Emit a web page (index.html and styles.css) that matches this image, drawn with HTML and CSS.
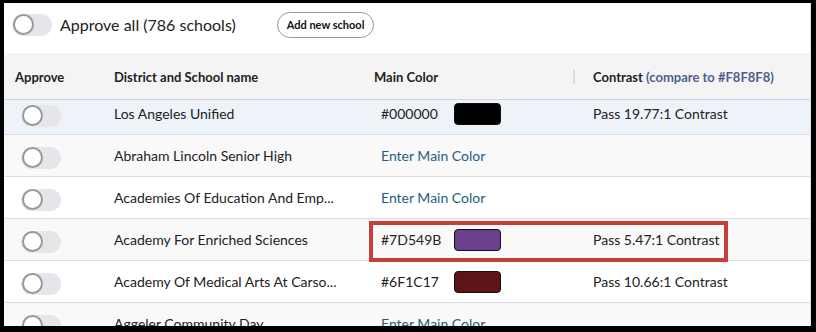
FILE: index.html
```html
<!DOCTYPE html>
<html lang="en">
<head>
    <meta charset="UTF-8">
    <meta name="viewport" content="width=device-width, initial-scale=1.0">
    <title>School colors</title>
    <link rel="stylesheet" href="styles.css">
</head>
<body>
    <div class="frame">
        <div class="toolbar">
            <span class="toggle"><span class="knob"></span></span>
            <span class="approve-all">Approve all (786 schools)</span>
            <button class="add-btn" type="button">Add new school</button>
        </div>
        <div class="thead">
            <div class="th">Approve</div>
            <div class="th">District and School name</div>
            <div class="th th-color">Main Color <span class="sep"></span></div>
            <div class="th">Contrast <span class="compare">(compare to #F8F8F8)</span></div>
        </div>
        <div class="tbody">
            <div class="rows">
                <div class="row row-active">
                    <div class="cell"><span class="toggle"><span class="knob"></span></span></div>
                    <div class="cell">Los Angeles Unified</div>
                    <div class="cell cell-color"><span class="hex">#000000</span><span class="swatch" style="background:#000000"></span></div>
                    <div class="cell">Pass 19.77:1 Contrast</div>
                </div>
                <div class="row row-alt">
                    <div class="cell"><span class="toggle"><span class="knob"></span></span></div>
                    <div class="cell">Abraham Lincoln Senior High</div>
                    <div class="cell cell-color"><a class="enter-link" href="#">Enter Main Color</a></div>
                    <div class="cell"></div>
                </div>
                <div class="row">
                    <div class="cell"><span class="toggle"><span class="knob"></span></span></div>
                    <div class="cell">Academies Of Education And Emp...</div>
                    <div class="cell cell-color"><a class="enter-link" href="#">Enter Main Color</a></div>
                    <div class="cell"></div>
                </div>
                <div class="row row-alt">
                    <div class="cell"><span class="toggle"><span class="knob"></span></span></div>
                    <div class="cell">Academy For Enriched Sciences</div>
                    <div class="cell cell-color"><span class="hex">#7D549B</span><span class="swatch" style="background:#6b3f8c"></span></div>
                    <div class="cell">Pass 5.47:1 Contrast</div>
                </div>
                <div class="row">
                    <div class="cell"><span class="toggle"><span class="knob"></span></span></div>
                    <div class="cell">Academy Of Medical Arts At Carso...</div>
                    <div class="cell cell-color"><span class="hex">#6F1C17</span><span class="swatch" style="background:#5c1515"></span></div>
                    <div class="cell">Pass 10.66:1 Contrast</div>
                </div>
                <div class="row row-alt">
                    <div class="cell"><span class="toggle"><span class="knob"></span></span></div>
                    <div class="cell">Aggeler Community Day</div>
                    <div class="cell cell-color"><a class="enter-link" href="#">Enter Main Color</a></div>
                    <div class="cell"></div>
                </div>
            </div>
        </div>
        <div class="highlight"></div>
    </div>
</body>
</html>
```

FILE: styles.css
```css
*, *:before, *:after {
    margin: 0;
    padding: 0;
    box-sizing: border-box;
}
html, body {
    background: #000;
    overflow: hidden;
}
body {
    padding: 3px 5px 6px 4px;
    font-family: Lato, "Liberation Sans", sans-serif;
    color: #222;
}
.frame {
    position: relative;
    height: 323px;
    background: #fff;
    overflow: hidden;
    border-right: 1px solid #e2e2e6;
}
.toolbar {
    display: flex;
    align-items: center;
    height: 50px;
    padding: 0 0 7px 8px;
}
.toggle {
    display: inline-flex;
    align-items: center;
    width: 40px;
    height: 22px;
    padding-left: 1px;
    border-radius: 11px;
    background: #e6e6ea;
}
.knob {
    width: 21px;
    height: 21px;
    border-radius: 50%;
    background: #fff;
    border: 2px solid #98989d;
}
.approve-all {
    margin-left: 8px;
    font-size: 16px;
    color: #222;
}
.add-btn {
    margin-left: 41px;
    height: 26px;
    padding: 0 9px;
    border: 1px solid #9a9aa0;
    border-radius: 13px;
    background: #fff;
    font-family: inherit;
    font-size: 11px;
    font-weight: bold;
    color: #111;
}
.thead, .row {
    display: grid;
    grid-template-columns: 99px 260px 219px 1fr;
    padding-left: 11px;
    align-items: center;
}
.thead {
    height: 47px;
    background: #f4f4f5;
    border-bottom: 1px solid #cdd3df;
    font-size: 13px;
    font-weight: bold;
    color: #222;
    padding-top: 2px;
}
.th-color {
    display: flex;
    align-items: center;
    justify-content: space-between;
    padding-right: 18px;
}
.sep {
    width: 2px;
    height: 14px;
    background: #d6dbe5;
}
.compare {
    font-weight: bold;
    color: #4f5f8c;
}
.tbody {
    height: 226px;
    overflow: hidden;
}
.rows {
    margin-top: -7px;
}
.row {
    height: 42px;
    border-bottom: 1px solid #d9dde6;
    background: #fff;
    font-size: 14px;
}
.row-alt {
    background: #f9f9fa;
}
.row-active {
    background: #eef2f9;
}
.row .toggle {
    margin-left: 6px;
    margin-top: 7px;
}
.cell-color {
    display: flex;
    align-items: center;
    padding-left: 7px;
}
.hex {
    width: 73px;
}
.swatch {
    display: inline-block;
    width: 47px;
    height: 22px;
    border: 1px solid #111;
    border-radius: 4px;
}
.enter-link {
    color: #1f6082;
    text-decoration: none;
}
.highlight {
    position: absolute;
    left: 365px;
    top: 218px;
    width: 359px;
    height: 41px;
    border: 4px solid #c6403a;
}
```
